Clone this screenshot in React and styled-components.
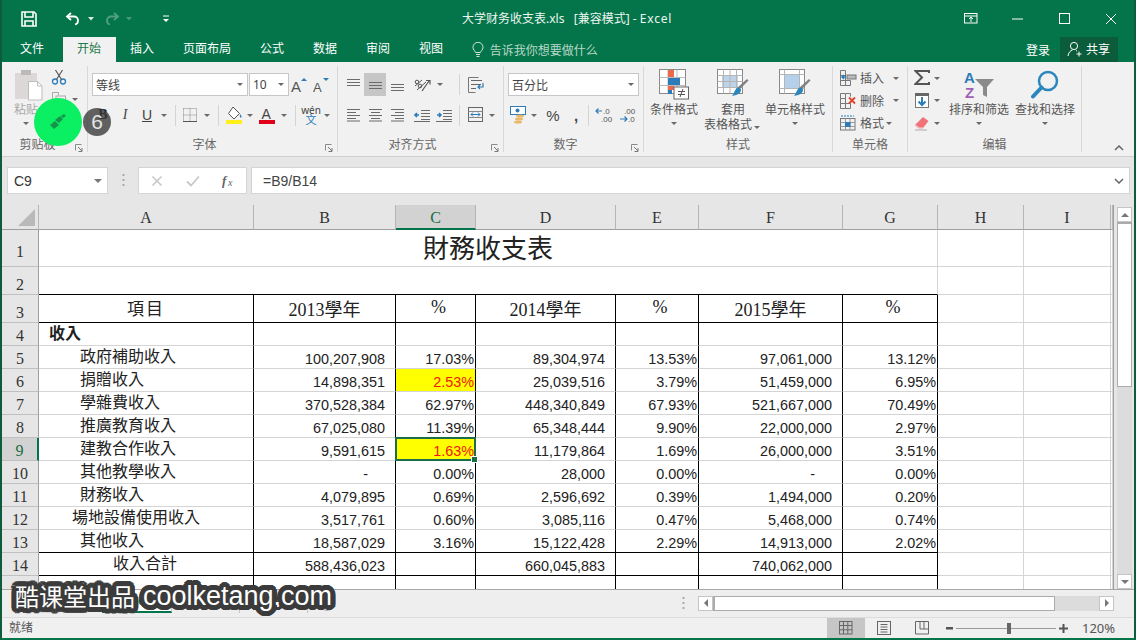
import React from 'react';
import styled, { createGlobalStyle } from 'styled-components';

const GREEN = '#04754a';
const UI_FONT = `"Noto Sans", "Noto Sans CJK SC", sans-serif`;
const CELL_FONT = `"Liberation Serif", "Noto Sans CJK TC", serif`;
const NUM_FONT = `"Liberation Sans", Arial, sans-serif`;

const GlobalStyle = createGlobalStyle`
  html, body { margin: 0; padding: 0; background: #fff; }
  body { font-family: ${UI_FONT}; overflow: hidden; }
`;

const Window = styled.div`
  position: relative;
  width: 1136px;
  height: 640px;
  box-sizing: border-box;
  display: flex;
  flex-direction: column;
  overflow: hidden;
  background: ${GREEN};
  border-left: 2px solid #0d5c3c;
  border-right: 2px solid #0d5c3c;
  border-bottom: 2px solid ${GREEN};
`;

const TitleBar = styled.div`
  height: 37px;
  display: flex;
  align-items: center;
  color: #fff;
  flex: none;
`;

const QuickAccess = styled.div`
  display: flex;
  align-items: center;
  width: 412px;
  padding-left: 18px;
  box-sizing: border-box;
  flex: none;
`;

const QaButton = styled.span`
  display: inline-flex;
  justify-content: center;
  align-items: center;
  width: ${(p) => p.$w}px;
  margin-left: ${(p) => p.$ml || 0}px;
  opacity: ${(p) => (p.$off ? 0.3 : 1)};
`;

const TitleText = styled.div`
  font-size: 12px;
  width: 400px;
  margin: -1px 0 0 48px;
  color: #eef6f1;
  white-space: pre;
  flex: none;
`;

const ExcelWord = styled.span`
  letter-spacing: 0.8px;
`;

const WindowButtons = styled.div`
  display: flex;
  margin-left: auto;
`;

const WinButton = styled.span`
  width: 46.5px;
  display: flex;
  justify-content: center;
  align-items: center;
`;

const TabBar = styled.div`
  height: 25px;
  display: flex;
  align-items: stretch;
  padding-left: 3.5px;
  flex: none;
`;

const Tab = styled.div`
  padding: 0 14.5px;
  margin-right: ${(p) => p.$mr || 0}px;
  font-size: 12px;
  line-height: 23px;
  color: ${(p) => (p.$active ? '#1d7a4c' : '#fff')};
  background: ${(p) => (p.$active ? '#f1f1f1' : 'transparent')};
`;

const TellMe = styled.div`
  display: flex;
  align-items: center;
  gap: 6px;
  margin-left: 14px;
  font-size: 12px;
  color: #b9d8c8;
`;

const AccountArea = styled.div`
  margin-left: auto;
  display: flex;
  align-items: center;
  padding-right: 16px;
  color: #fff;
  font-size: 12px;
`;

const ShareButton = styled.div`
  display: flex;
  align-items: center;
  gap: 3px;
  height: 25px;
  padding: 0 8px 0 7px;
  margin: -1px 0 0 10px;
  background: #0a5c3a;
`;

const Ribbon = styled.div`
  height: 94px;
  flex: none;
  display: flex;
  padding-left: 2px;
  background: #f1f1f1;
  border-bottom: 1px solid #d0d0d0;
  color: #555;
  font-size: 12px;
`;

const Group = styled.div`
  width: ${(p) => p.$w}px;
  flex: none;
  box-sizing: border-box;
  display: flex;
  flex-direction: column;
  margin: 4px 0;
  border-right: 1px solid #d8d8d8;
`;

const GroupBody = styled.div`
  display: flex;
  height: 70px;
  flex: none;
`;

const GroupStack = styled.div`
  display: flex;
  flex-direction: column;
  gap: 8px;
  padding-top: 7px;
  padding-left: ${(p) => p.$pl || 0}px;
`;

const GroupLabel = styled.div`
  display: grid;
  grid-template-columns: ${(p) => (p.$launcher ? '1fr auto 1fr 12px' : '1fr auto 1fr')};
  align-items: center;
  height: 16px;
  flex: none;
  margin-top: 1px;
  color: #666;
  font-size: 12px;
  line-height: 16px;
  padding-right: ${(p) => (p.$launcher ? 4 : 0)}px;
`;

const Launcher = styled.span`
  grid-column: 4;
  justify-self: end;
  display: flex;
  align-self: end;
  padding-bottom: 1px;
`;

const ToolRow = styled.div`
  display: flex;
  align-items: center;
  height: ${(p) => p.$h || 22}px;
`;

const Tool = styled.span`
  width: ${(p) => p.$w || 22}px;
  height: ${(p) => p.$h || 22}px;
  display: inline-flex;
  align-items: center;
  justify-content: center;
  flex: none;
  background: ${(p) => (p.$on ? '#c6c6c6' : 'transparent')};
  color: #444;
`;

const BoldTool = styled(Tool)`
  font: bold 14px ${CELL_FONT};
  color: #111;
`;

const ItalicTool = styled(Tool)`
  font: italic 14px ${CELL_FONT};
`;

const UnderlineTool = styled(Tool)`
  font: 14px ${NUM_FONT};
  text-decoration: underline;
`;

const SignTool = styled(Tool)`
  font: ${(p) => (p.$bold ? 'bold ' : '')}15px ${NUM_FONT};
`;

const PhoneticTool = styled(Tool)`
  flex-direction: column;
  font-size: 10px;
  line-height: 10px;
`;

const PhoneticChar = styled.span`
  color: #2b7cb8;
  font-size: 11px;
`;

const Caret = styled.span`
  width: ${(p) => p.$w || 10}px;
  display: inline-flex;
  justify-content: center;
  align-items: center;
  flex: none;
  &::after {
    content: '';
    border-left: 3px solid transparent;
    border-right: 3px solid transparent;
    border-top: 3px solid #6a6a6a;
  }
`;

const Sep = styled.span`
  width: 1px;
  height: 21px;
  flex: none;
  background: #d4d4d4;
  margin-left: ${(p) => p.$l}px;
  margin-right: ${(p) => p.$r}px;
`;

const Select = styled.div`
  width: ${(p) => p.$w}px;
  height: 23px;
  margin-left: ${(p) => p.$ml || 0}px;
  box-sizing: border-box;
  flex: none;
  display: flex;
  align-items: center;
  justify-content: space-between;
  padding: 0 2px 0 3px;
  background: #fff;
  border: 1px solid #c6c6c6;
  color: #444;
  font-size: 12px;
`;

const BigButton = styled.div`
  width: ${(p) => p.$w}px;
  margin-left: ${(p) => p.$ml || 0}px;
  flex: none;
  display: flex;
  flex-direction: column;
  align-items: center;
  padding-top: 2px;
  font-size: 12px;
  line-height: 15px;
  color: ${(p) => (p.$muted ? '#a8a8a8' : '#555')};
  white-space: nowrap;
`;

const BigIcon = styled.span`
  height: 33px;
  display: flex;
  align-items: center;
  margin-bottom: 1px;
  padding-left: ${(p) => p.$pl || 0}px;
`;

const BigCaret = styled(Caret)`
  height: 12px;
`;

const SmallColumn = styled.div`
  display: flex;
  flex-direction: column;
  flex: none;
  padding-top: 1px;
  margin-left: ${(p) => p.$ml || 0}px;
`;

const CellAction = styled.div`
  height: 22.5px;
  display: flex;
  align-items: center;
  gap: 3px;
  font-size: 12px;
  color: #555;
  white-space: nowrap;
`;

const CollapseSlot = styled.div`
  flex: 1;
  display: flex;
  align-items: flex-end;
  justify-content: flex-end;
  padding: 0 10px 5px 0;
`;

const FormulaBar = styled.div`
  height: 48px;
  flex: none;
  box-sizing: border-box;
  background: #e6e6e6;
  display: flex;
  align-items: flex-start;
  padding: 10px 4px 0 5px;
`;

const NameBox = styled.div`
  width: 101px;
  height: 27px;
  box-sizing: border-box;
  flex: none;
  display: flex;
  align-items: center;
  justify-content: space-between;
  padding: 0 5px 0 6px;
  background: #fff;
  border: 1px solid #d4d4d4;
  font: 14px ${NUM_FONT};
  color: #333;
`;

const Grip = styled.span`
  width: 30px;
  height: 27px;
  flex: none;
  display: flex;
  align-items: center;
  justify-content: center;
`;

const FormulaButtons = styled.div`
  width: 109px;
  height: 27px;
  flex: none;
  box-sizing: border-box;
  display: flex;
  align-items: center;
  padding: 0 10px 0 12px;
  justify-content: space-between;
  background: #fff;
  border: 1px solid #d4d4d4;
`;

const FormulaInput = styled.div`
  flex: 1;
  height: 27px;
  margin-left: 4px;
  box-sizing: border-box;
  display: flex;
  align-items: center;
  justify-content: space-between;
  padding: 0 5px 0 11px;
  background: #fff;
  border: 1px solid #d4d4d4;
  font: 14px ${NUM_FONT};
  color: #444;
`;

const SheetArea = styled.div`
  height: 384px;
  flex: none;
  display: flex;
  background: #e6e6e6;
`;

const Sheet = styled.div`
  width: 1111px;
  height: 384px;
  flex: none;
  display: grid;
  grid-template-columns: 37px 215px 142px 80px 140px 83px 144px 95px 86px 87px 2px;
  grid-template-rows: 25px 37px 28px 28px repeat(12, 23px);
  overflow: hidden;
  border-right: 1px solid #9e9e9e;
`;

const Corner = styled.div`
  background: #e6e6e6;
  border-right: 1px solid #b5b5b5;
  border-bottom: 1px solid #9e9e9e;
  display: flex;
  align-items: flex-end;
  justify-content: flex-end;
  padding: 0 3px 3px 0;
`;

const ColHead = styled.div`
  box-sizing: border-box;
  background: ${(p) => (p.$sel ? '#d2d2d2' : '#e6e6e6')};
  border-right: 1px solid #b5b5b5;
  border-bottom: ${(p) => (p.$sel ? `2px solid ${GREEN}` : '1px solid #9e9e9e')};
  font: 16px ${CELL_FONT};
  color: ${(p) => (p.$sel ? '#176b45' : '#333')};
  text-align: center;
  line-height: 26px;
`;

const RowHead = styled.div`
  box-sizing: border-box;
  background: ${(p) => (p.$sel ? '#d2d2d2' : '#e6e6e6')};
  border-right: ${(p) => (p.$sel ? `2px solid ${GREEN}` : '1px solid #9e9e9e')};
  border-bottom: 1px solid #c0c0c0;
  font: 16px/1 ${CELL_FONT};
  color: ${(p) => (p.$sel ? '#176b45' : '#333')};
  display: flex;
  align-items: flex-end;
  justify-content: center;
  padding-bottom: ${(p) => p.$pb || 1}px;
`;

const Cell = styled.div`
  position: relative;
  box-sizing: border-box;
  min-width: 0;
  grid-column: ${(p) => (p.$span ? `span ${p.$span}` : 'auto')};
  display: flex;
  align-items: center;
  justify-content: ${(p) => p.$justify || 'flex-start'};
  padding-left: ${(p) => p.$pl || 0}px;
  padding-right: ${(p) => p.$pr || 0}px;
  background: ${(p) => p.$fill || '#fff'};
  color: ${(p) => p.$color || '#222'};
  border-right: 1px solid ${(p) => (p.$darkRight ? '#000' : '#d4d4d4')};
  border-bottom: 1px solid ${(p) => (p.$darkBottom ? '#000' : '#d4d4d4')};
  white-space: nowrap;
`;

const NumberCell = styled(Cell)`
  font: 14.4px ${NUM_FONT};
  padding-top: 3px;
`;

const LabelCell = styled(Cell)`
  font: ${(p) => (p.$bold ? 'bold ' : '')}16px ${CELL_FONT};
  padding-bottom: 4px;
`;

const HeadCell = styled(Cell)`
  font: ${(p) => p.$size || 18}px ${CELL_FONT};
  letter-spacing: ${(p) => p.$track || 0}px;
  padding-bottom: 2px;
`;

const TitleCell = styled(Cell)`
  font: 26px ${CELL_FONT};
  padding-bottom: 4px;
`;

const Selection = styled.span`
  position: absolute;
  left: -1px;
  top: -1px;
  right: -1px;
  bottom: -1px;
  border: 2px solid #1a6f48;
  pointer-events: none;
  z-index: 2;
  &::after {
    content: '';
    position: absolute;
    right: -4px;
    bottom: -4px;
    width: 5px;
    height: 5px;
    background: #1a6f48;
    border: 1px solid #fff;
  }
`;

const VScroll = styled.div`
  flex: none;
  width: 17px;
  margin-left: 3px;
  display: flex;
  flex-direction: column;
  padding-top: 2px;
`;

const ScrollButton = styled.div`
  box-sizing: border-box;
  width: 15px;
  height: 15px;
  flex: none;
  display: flex;
  align-items: center;
  justify-content: center;
  background: #fff;
  border: 1px solid #c4c4c4;
`;

const VThumb = styled.div`
  width: 15px;
  height: 165px;
  box-sizing: border-box;
  flex: none;
  background: #fff;
  border: 1px solid #ababab;
  border-top-width: 2px;
`;

const VTrack = styled.div`
  width: 15px;
  flex: 1;
  background: #dcdcdc;
`;

const TabStrip = styled.div`
  height: 28px;
  flex: none;
  box-sizing: border-box;
  display: flex;
  align-items: flex-start;
  background: #eeeeee;
  border-top: 1px solid #a8a8a8;
`;

const SheetTab = styled.div`
  width: ${(p) => p.$w}px;
  height: 23px;
  margin-left: ${(p) => p.$ml || 0}px;
  box-sizing: border-box;
  flex: none;
  text-align: center;
  font-size: 12px;
  line-height: 22px;
  color: ${(p) => (p.$active ? GREEN : '#555')};
  background: ${(p) => (p.$active ? '#fff' : 'transparent')};
  border-right: 1px solid #c4c4c4;
  border-bottom: ${(p) => (p.$active ? `2px solid ${GREEN}` : 'none')};
`;

const AddSheet = styled.span`
  display: flex;
  margin: 5px 0 0 11px;
`;

const HScrollGroup = styled.div`
  display: flex;
  align-items: center;
  margin-left: auto;
  height: 26px;
  padding-right: 20px;
`;

const HThumb = styled.div`
  width: 342px;
  height: 15px;
  box-sizing: border-box;
  background: #fff;
  border: 1px solid #ababab;
  border-left-width: 2px;
`;

const HTrack = styled.div`
  width: 44px;
  height: 15px;
  background: #dcdcdc;
`;

const StatusBar = styled.div`
  flex: 1;
  display: flex;
  align-items: stretch;
  background: #f0f0f0;
  border-top: 1px solid #dcdcdc;
  font-size: 12px;
  color: #555;
`;

const StatusText = styled.div`
  padding-left: 7px;
  line-height: 20px;
`;

const ViewButtons = styled.div`
  margin-left: auto;
  display: flex;
`;

const ViewButton = styled.div`
  width: 38px;
  display: flex;
  align-items: center;
  justify-content: center;
  background: ${(p) => (p.$on ? '#c6c6c6' : 'transparent')};
`;

const ZoomControl = styled.div`
  display: flex;
  align-items: center;
  padding: 0 20px 0 5px;
`;

const ZoomTrack = styled.div`
  position: relative;
  width: 100px;
  height: 1px;
  margin: 0 3px;
  background: #9a9a9a;
  &::after {
    content: '';
    position: absolute;
    left: 51px;
    top: -5px;
    width: 4px;
    height: 11px;
    background: #666;
  }
`;

const ZoomValue = styled.span`
  width: 32px;
  margin-left: 14px;
  font-size: 13px;
  color: #555;
`;

const Touch = styled.div`
  position: absolute;
  left: 32px;
  top: 98px;
  width: 48px;
  height: 48px;
  border-radius: 50%;
  background: #0bef62;
  display: flex;
  align-items: center;
  justify-content: center;
`;

const TouchCount = styled.div`
  position: absolute;
  left: 81px;
  top: 108px;
  width: 28px;
  height: 28px;
  border-radius: 50%;
  background: rgba(60, 60, 60, 0.8);
  color: #e4e4e4;
  font: 21px/28px ${NUM_FONT};
  text-align: center;
`;

// round dark halo around the caption letters, the way the video burns it in
const HALO = Array.from({ length: 20 }, (_, i) => {
  const a = (i / 20) * Math.PI * 2;
  return `${(Math.cos(a) * 5).toFixed(1)}px ${(Math.sin(a) * 5).toFixed(1)}px 0 #3b3b3b`;
}).join(', ');

const Watermark = styled.div`
  position: absolute;
  left: 13px;
  top: 580px;
  display: flex;
  align-items: center;
  gap: 8px;
  color: #fff;
  white-space: nowrap;
  text-shadow: ${HALO};
`;

const WatermarkCn = styled.span`
  font: 24px/32px "Noto Sans CJK SC", sans-serif;
`;

const WatermarkEn = styled.span`
  font: 27px/32px ${NUM_FONT};
`;

const Svg = ({ w, h = w, children, ...rest }) => (
  <svg width={w} height={h} viewBox={`0 0 ${w} ${h}`} fill="none" {...rest}>{children}</svg>
);

const LINE = '#6b6b6b';
const BLUE = '#2b7cb8';

const SaveIcon = () => (
  <Svg w={16}>
    <path d="M1 1h12l2 2v12H1z" stroke="#fff" strokeWidth="1.6" />
    <path d="M4 1v5h8V1M4 15v-5h8v5" stroke="#fff" strokeWidth="1.6" />
  </Svg>
);

const UndoIcon = () => (
  <Svg w={16} h={14}>
    <path d="M6 1L2 4.500 6 8" stroke="#fff" strokeWidth="1.800" />
    <path d="M2.500 4.500H9a4 4 0 0 1 4 4 4 4 0 0 1-3 4" stroke="#fff" strokeWidth="1.800" />
  </Svg>
);

const RedoIcon = () => (
  <Svg w={16} h={14}>
    <path d="M10 1l4 3.500L10 8" stroke="#fff" strokeWidth="1.800" />
    <path d="M13.500 4.500H7a4 4 0 0 0-4 4 4 4 0 0 0 3 4" stroke="#fff" strokeWidth="1.800" />
  </Svg>
);

const CustomizeIcon = () => (
  <Svg w={8} h={8}>
    <path d="M1 1h6" stroke="#fff" />
    <path d="M1 4h6L4 7z" fill="#fff" />
  </Svg>
);

const SmallCaretWhite = () => (
  <Svg w={7} h={4}><path d="M0 0h6L3 3.500z" fill="#dcebe3" /></Svg>
);

const RibbonDisplayIcon = () => (
  <Svg w={14} h={11}>
    <rect x=".5" y=".5" width="12.500" height="9.500" stroke="#fff" />
    <path d="M.500 3h12.500M7 9V4.500M5 6l2-2 2 2" stroke="#fff" />
  </Svg>
);

const BulbIcon = () => (
  <Svg w={12} h={16}>
    <path d="M3.500 10.500C3 8.500 1 8 1 5.300a5 5 0 0 1 10 0c0 2.700-2 3.200-2.500 5.200z" stroke="#cfe5d8" />
    <path d="M4 12.500h4M4.500 14.500h3" stroke="#cfe5d8" />
  </Svg>
);

const ShareIcon = () => (
  <Svg w={16} h={16}>
    <circle cx="7" cy="5" r="3.600" stroke="#fff" />
    <path d="M1 15c.5-3.500 2.500-5.500 4.500-6M9 9.500l1 .6" stroke="#fff" />
    <path d="M12 10.500v5M9.500 13h5" stroke="#fff" />
  </Svg>
);

const PasteIcon = () => (
  <Svg w={30} h={32}>
    <rect x="1" y="4" width="22" height="26" fill="#dcd8d8" />
    <rect x="7" y="1" width="10" height="5" fill="#bdb9b9" />
    <path d="M14.500 12.500h9l4.500 4.500v14h-13.500z" fill="#fff" stroke="#bdbdbd" />
    <path d="M23.500 12.500v4.500h4.500" stroke="#bdbdbd" />
  </Svg>
);

const ScissorsIcon = () => (
  <Svg w={16}>
    <circle cx="4" cy="12.500" r="2.500" stroke={BLUE} strokeWidth="1.300" />
    <circle cx="12" cy="12.500" r="2.500" stroke={BLUE} strokeWidth="1.300" />
    <path d="M5.500 10.500L11.500 1M10.500 10.500L4.500 1" stroke="#555" strokeWidth="1.200" />
  </Svg>
);

const CopyIcon = () => (
  <Svg w={16}>
    <path d="M1.500 1.500h6v3M1.500 1.500v10h3" stroke="#aaa" />
    <rect x="5" y="5" width="9.500" height="10" fill="#f1f1f1" stroke="#aaa" />
    <path d="M7 8h5.500M7 10h5.500M7 12h5.500" stroke="#bbb" />
  </Svg>
);

const BrushIcon = () => (
  <Svg w={18} h={16}>
    <path d="M1 11l5-4 4 4-5 4z" fill="#17944c" />
    <path d="M6 6l5-4 3 3-4 4z" fill="#17944c" />
    <path d="M12 2l3-2 2 2-3 2z" fill="#17944c" />
  </Svg>
);

const Launch = () => (
  <Svg w={8} h={8}>
    <path d="M.500 6.500v-6h6" stroke="#8a8a8a" />
    <path d="M3 3l4 4M7 4v3.500H3.500" stroke="#777" />
  </Svg>
);

const GrowIcon = ({ up }) => (
  <Svg w={18} h={18}>
    <text x="0" y="16" fontFamily={NUM_FONT} fontSize={up ? 15 : 13} fill="#555">A</text>
    <path d={up ? 'M10 5l3-3 3 3z' : 'M10 2h6l-3 3z'} fill={BLUE} />
  </Svg>
);

const BorderIcon = () => (
  <Svg w={14}>
    <path d="M.500.500h13v13M.500.500v13M7 .500v13M.500 7h13" stroke="#888" strokeDasharray="1 1" />
    <path d="M0 13.500h14" stroke="#555" />
  </Svg>
);

const FillIcon = () => (
  <Svg w={18} h={18}>
    <path d="M7 1l6.500 6.500L8 13 2.500 7.500z" fill="#fff" stroke="#555" />
    <path d="M14 8c1.500 2 2 3 1.200 3.600-1 .6-1.700-.6-1.200-3.600z" fill={BLUE} />
    <rect y="14" x="0" width="16" height="4" fill="#ffef1a" />
  </Svg>
);

const FontColorIcon = () => (
  <Svg w={16} h={18}>
    <text x="2.500" y="13" fontFamily={NUM_FONT} fontSize="14" fill="#444">A</text>
    <rect y="14" width="16" height="4" fill="#e0001a" />
  </Svg>
);

const lines = (rows) => rows.map(([x1, x2, y]) => `M${x1} ${y}H${x2}`).join('');

const AlignIcon = ({ rows }) => (
  <Svg w={15} h={14}><path d={lines(rows)} stroke={LINE} /></Svg>
);

const ALIGN = {
  top: [[1, 14, 1.5], [1, 14, 4.5], [1, 14, 7.5]],
  middle: [[1, 14, 4.5], [1, 14, 7.5], [1, 14, 10.5]],
  bottom: [[1, 14, 6.5], [1, 14, 9.5], [1, 14, 12.5]],
  left: [[1, 14, 1.5], [1, 10, 4.5], [1, 14, 7.5], [1, 10, 10.5], [1, 14, 13]],
  center: [[1, 14, 1.5], [3, 12, 4.5], [1, 14, 7.5], [3, 12, 10.5], [1, 14, 13]],
  right: [[1, 14, 1.5], [5, 14, 4.5], [1, 14, 7.5], [5, 14, 10.5], [1, 14, 13]],
};

const OrientIcon = () => (
  <Svg w={18} h={16}>
    <path d="M2 9l7-6M4 13l9-8" stroke="#555" />
    <circle cx="4" cy="5" r="1.800" stroke="#555" />
    <circle cx="7" cy="9" r="1.800" stroke="#555" />
    <path d="M9 14l7-10M13 3.500h4v4" stroke="#555" strokeWidth="1.200" />
  </Svg>
);

const WrapIcon = () => (
  <Svg w={17} h={16}>
    <path d="M.500.500h10M.500 15.500h7M.500.500v15" stroke="#777" />
    <path d="M3 3.500h11M3 7.500h10M3 11.500h5" stroke="#666" />
    <path d="M15 6v4h-5M12 8l-2 2 2 2" stroke={BLUE} strokeWidth="1.200" />
  </Svg>
);

const MergeIcon = () => (
  <Svg w={16}>
    <rect x=".5" y=".5" width="14" height="14" stroke="#666" />
    <path d="M.500 4.500h14M.500 10.500h14" stroke="#888" />
    <path d="M3 7.500h9M5 5.500l-2 2 2 2M10 5.500l2 2-2 2" stroke={BLUE} />
  </Svg>
);

const IndentIcon = ({ flip }) => (
  <Svg w={16} h={13}>
    <path d="M7 1.500h9M7 4.500h9M7 7.500h9M7 10.500h9M0 12.500h16" stroke={LINE} />
    <path d={flip ? 'M1 6h4M3 4l2 2-2 2' : 'M5 6H1M3 4L1 6l2 2'} stroke={BLUE} strokeWidth="1.600" />
  </Svg>
);

const CurrencyIcon = () => (
  <Svg w={16} h={18}>
    <rect x="0.500" y="0.500" width="15" height="8" fill="#fff" stroke={BLUE} />
    <circle cx="7.500" cy="4.500" r="2" fill={BLUE} />
    <ellipse cx="10" cy="10" rx="4" ry="1.500" fill="#e9b96a" />
    <ellipse cx="9" cy="13" rx="4" ry="1.500" fill="#e9b96a" />
    <ellipse cx="8" cy="16" rx="4" ry="1.500" fill="#e9b96a" />
  </Svg>
);

const DecimalMoreIcon = () => (
  <Svg w={20} h={16}>
    <text x="8" y="7" fontFamily={NUM_FONT} fontSize="8" fill="#555">.0</text>
    <text x="6" y="15" fontFamily={NUM_FONT} fontSize="8" fill="#555">.00</text>
    <path d="M7 4H1M3.500 1.500L1 4l2.500 2.500" stroke={BLUE} strokeWidth="1.200" />
  </Svg>
);

const DecimalLessIcon = () => (
  <Svg w={20} h={16}>
    <text x="7" y="7" fontFamily={NUM_FONT} fontSize="8" fill="#555">.00</text>
    <text x="11" y="15" fontFamily={NUM_FONT} fontSize="8" fill="#555">.0</text>
    <path d="M3 12h7M7.500 9.500L10 12l-2.500 2.500" stroke={BLUE} strokeWidth="1.200" />
  </Svg>
);

const ConditionalIcon = () => (
  <Svg w={30} h={31}>
    <rect x=".5" y=".5" width="26" height="24" fill="#fff" stroke="#888" />
    <path d="M9 .500v24M18 .500v24M.500 8.500h26M.500 16.500h26" stroke="#bbb" />
    <rect x="9" y="1" width="6" height="7" fill="#ec6a4a" />
    <rect x="9" y="9" width="12" height="7" fill="#2b7cb8" />
    <rect x="9" y="17" width="6" height="4" fill="#ec6a4a" />
    <rect x="9" y="21" width="4" height="4" fill="#2b7cb8" />
    <rect x="15" y="18" width="14.500" height="12" fill="#fff" stroke="#666" />
    <path d="M19 22.500h7M19 25.500h7M24 20l-3 8" stroke="#555" />
  </Svg>
);

const TableStyleIcon = () => (
  <Svg w={32} h={31}>
    <rect x=".5" y=".5" width="25" height="24" fill="#fff" stroke="#888" />
    <rect x="5" y="7" width="16" height="12" fill="#bcd3e8" />
    <path d="M.500 6.500h25M.500 12.500h25M.500 18.500h25M6.500.500v24M13 .500v24M19.500.500v24" stroke="#b5b5b5" />
    <path d="M30 10l1.500 1.500-8 8-3-1z" fill="#808080" />
    <path d="M20 19c2-1 4 0 4 2 0 3-3 5-9 6 2-2 2-5 5-8z" fill="#2b86bd" />
  </Svg>
);

const CellStyleIcon = () => (
  <Svg w={32} h={31}>
    <rect x=".5" y=".5" width="25" height="24" fill="#fff" stroke="#888" />
    <path d="M.500 5.500h25M.500 19.500h25M5.500.500v24M20.500.500v24" stroke="#b5b5b5" />
    <rect x="6" y="6" width="14" height="13" fill="#b4d0ea" />
    <path d="M30 10l1.500 1.500-8 8-3-1z" fill="#808080" />
    <path d="M20 19c2-1 4 0 4 2 0 3-3 5-9 6 2-2 2-5 5-8z" fill="#2b86bd" />
  </Svg>
);

const InsertIcon = () => (
  <Svg w={17} h={16}>
    <path d="M.500.500h5v15h-5zM.500 5.500h5M.500 10.500h5M5.500 10.500h5v5h-5z" stroke="#777" />
    <rect x="7" y="5" width="9" height="4" fill="#bbb" stroke="#777" />
    <path d="M6 7H2M4 5L2 7l2 2" stroke={BLUE} strokeWidth="1.400" />
  </Svg>
);

const DeleteIcon = () => (
  <Svg w={17} h={16}>
    <path d="M.500.500h5v5h-5zM.500 5.500h5v5h-5zM.500 10.500h5v5h-5zM5.500 10.500h5v5h-5zM5.500.500h5v3" stroke="#777" />
    <path d="M9 4.500l6 6M15 4.500l-6 6" stroke="#e0432c" strokeWidth="1.800" />
  </Svg>
);

const FormatIcon = () => (
  <Svg w={17} h={16}>
    <rect x=".5" y="3.500" width="14.500" height="11.500" stroke="#777" />
    <path d="M.500 7.500h14.500M.500 11.500h14.500M5.500 3.500V15M10 3.500V15" stroke="#999" />
    <rect x="5" y="7" width="5.500" height="5" fill={BLUE} />
    <path d="M1 1h13" stroke={BLUE} strokeDasharray="2 1" />
  </Svg>
);

const SigmaIcon = () => (
  <Svg w={16}>
    <path d="M15 3V1H1.500L8 7.500 1.500 14H15v-2" stroke="#555" strokeWidth="2" />
  </Svg>
);

const FillDownIcon = () => (
  <Svg w={15}>
    <rect x=".5" y=".5" width="13" height="14" fill="#fff" stroke="#777" />
    <rect x="0" y="0" width="14" height="3" fill="#666" />
    <path d="M7 4v8M3.500 8.500L7 12l3.500-3.500" stroke={BLUE} strokeWidth="2" />
  </Svg>
);

const EraserIcon = () => (
  <Svg w={16} h={15}>
    <path d="M9 1l5.500 4L9 12H5L1 9z" fill="#f0737a" />
    <path d="M1 9l4 3h4" stroke="#f7b9bc" strokeWidth="1.500" />
    <path d="M1 14h12" stroke="#aaa" />
  </Svg>
);

const SortIcon = () => (
  <Svg w={32} h={30}>
    <text x="1" y="13" fontFamily={NUM_FONT} fontWeight="bold" fontSize="15" fill="#2b7cb8">A</text>
    <text x="2" y="28" fontFamily={NUM_FONT} fontWeight="bold" fontSize="15" fill="#a05fb4">Z</text>
    <path d="M12 9h19l-7 8v10l-4-2v-8z" fill="#8a8a8a" />
  </Svg>
);

const FindIcon = () => (
  <Svg w={28} h={30}>
    <circle cx="17" cy="11" r="9" stroke="#2b86bd" strokeWidth="2.500" />
    <path d="M10.500 17.500L2 26.500" stroke="#2b86bd" strokeWidth="4" strokeLinecap="round" />
  </Svg>
);

const ChevronUp = () => (
  <Svg w={10} h={6}>
    <path d="M1 5l4-4 4 4" stroke="#666" strokeWidth="1.500" />
  </Svg>
);

const ChevronDown = () => (
  <Svg w={10} h={6}>
    <path d="M1 1l4 4 4-4" stroke="#666" strokeWidth="1.500" />
  </Svg>
);

const CrossIcon = () => (
  <Svg w={12}><path d="M1.500 1.500l9 9M10.500 1.500l-9 9" stroke="#c8c8c8" strokeWidth="1.600" /></Svg>
);

const CheckIcon = () => (
  <Svg w={14} h={12}><path d="M1 6.500l4 4 8-9" stroke="#c8c8c8" strokeWidth="1.800" /></Svg>
);

const FxIcon = () => (
  <Svg w={14}>
    <text x="0" y="11" fontFamily={CELL_FONT} fontStyle="italic" fontWeight="bold" fontSize="13" fill="#666">f</text>
    <text x="6" y="12" fontFamily={CELL_FONT} fontStyle="italic" fontSize="10" fill="#666">x</text>
  </Svg>
);

const DotsIcon = () => (
  <Svg w={3} h={13}>
    <path d="M.500 1h2M.500 6h2M.500 11h2" stroke="#aaa" strokeWidth="2" />
  </Svg>
);

const CornerIcon = () => (
  <Svg w={17} h={17}><path d="M17 0v17H0z" fill="#b9b9b9" /></Svg>
);

const Arrow = ({ dir }) => {
  const d = { up: 'M0 6l4-4 4 4z', down: 'M0 2h8L4 6z', left: 'M6 0v8L2 4z', right: 'M2 0v8l4-4z' }[dir];
  return <Svg w={8} h={8}><path d={d} fill="#777" /></Svg>;
};

const PlusCircle = () => (
  <Svg w={16}>
    <circle cx="8" cy="8" r="7.300" stroke="#9a9a9a" />
    <path d="M8 3.500v9M3.500 8h9" stroke="#888" strokeWidth="2" />
  </Svg>
);

const NormalViewIcon = () => (
  <Svg w={14}>
    <rect x=".5" y=".5" width="12.500" height="12.500" stroke="#666" />
    <path d="M4.500.500v12.500M8.800.500v12.500M.500 4.500h12.500M.500 8.800h12.500" stroke="#666" />
  </Svg>
);

const PageViewIcon = () => (
  <Svg w={14}>
    <rect x=".5" y=".5" width="13" height="13" stroke="#666" />
    <path d="M3.500 3.500h7M3.500 6h7M3.500 8.500h7M3.500 11h7" stroke="#666" />
  </Svg>
);

const BreakViewIcon = () => (
  <Svg w={14}>
    <path d="M.500.500h13v12.500h-13zM5 .500v7.500h8.500M9 .500v7.500" stroke="#666" />
  </Svg>
);

const MinusIcon = () => <Svg w={7} h={3}><rect width="7" height="2.500" fill="#555" /></Svg>;
const PlusIcon = () => <Svg w={9} h={9}><path d="M4.500 0v9M0 4.500h9" stroke="#555" strokeWidth="2" /></Svg>;

const COLS = ['A', 'B', 'C', 'D', 'E', 'F', 'G', 'H', 'I'];

// label, indent, then the values of B..G
const ROWS = [
  { n: 5, label: '政府補助收入', pl: 41, v: ['100,207,908', '17.03%', '89,304,974', '13.53%', '97,061,000', '13.12%'] },
  { n: 6, label: '捐贈收入', pl: 41, v: ['14,898,351', '2.53%', '25,039,516', '3.79%', '51,459,000', '6.95%'], hot: true },
  { n: 7, label: '學雜費收入', pl: 41, v: ['370,528,384', '62.97%', '448,340,849', '67.93%', '521,667,000', '70.49%'] },
  { n: 8, label: '推廣教育收入', pl: 41, v: ['67,025,080', '11.39%', '65,348,444', '9.90%', '22,000,000', '2.97%'] },
  { n: 9, label: '建教合作收入', pl: 41, v: ['9,591,615', '1.63%', '11,179,864', '1.69%', '26,000,000', '3.51%'], hot: true, sel: true },
  { n: 10, label: '其他教學收入', pl: 41, v: ['-', '0.00%', '28,000', '0.00%', '-', '0.00%'] },
  { n: 11, label: '財務收入', pl: 41, v: ['4,079,895', '0.69%', '2,596,692', '0.39%', '1,494,000', '0.20%'] },
  { n: 12, label: '場地設備使用收入', pl: 33, v: ['3,517,761', '0.60%', '3,085,116', '0.47%', '5,468,000', '0.74%'] },
  { n: 13, label: '其他收入', pl: 41, v: ['18,587,029', '3.16%', '15,122,428', '2.29%', '14,913,000', '2.02%'], dark: true },
  { n: 14, label: '收入合計', pl: 74, v: ['588,436,023', '', '660,045,883', '', '740,062,000', ''], dark: true },
];

const EmptyTail = () => (
  <>
    <Cell />
    <Cell />
    <Cell />
  </>
);

const SpreadSheet = () => (
  <Sheet>
    <Corner><CornerIcon /></Corner>
    {COLS.map((c) => (
      <ColHead key={c} $sel={c === 'C'}>{c}</ColHead>
    ))}
    <ColHead />

    <RowHead $pb={6}>1</RowHead>
    <TitleCell $span={7} $justify="center">財務收支表</TitleCell>
    <EmptyTail />

    <RowHead>2</RowHead>
    <Cell $span={7} $darkBottom />
    <EmptyTail />

    <RowHead>3</RowHead>
    <HeadCell $justify="center" $darkRight $darkBottom $size={17} $track={2}>項目</HeadCell>
    {['2013學年', '%', '2014學年', '%', '2015學年', '%'].map((t, i) => (
      <HeadCell key={i} $justify="center" $pl={t === '%' ? 6 : 0} $darkRight $darkBottom>{t}</HeadCell>
    ))}
    <EmptyTail />

    <RowHead>4</RowHead>
    <LabelCell $bold $pl={10} $darkRight>收入</LabelCell>
    {COLS.slice(1, 7).map((c) => (
      <Cell key={c} $darkRight />
    ))}
    <EmptyTail />

    {ROWS.map((r) => (
      <React.Fragment key={r.n}>
        <RowHead $sel={r.sel}>{r.n}</RowHead>
        <LabelCell $pl={r.pl} $darkRight $darkBottom={r.dark}>{r.label}</LabelCell>
        {r.v.map((t, i) => {
          const isPct = i % 2 === 1;
          const isDash = t === '-';
          const hot = r.hot && i === 1;
          return (
            <NumberCell
              key={i}
              $justify="flex-end"
              $pr={isPct ? 1 : isDash ? 27 : 10}
              $darkRight
              $darkBottom={r.dark}
              $fill={hot ? '#ffff00' : undefined}
              $color={hot ? '#f01808' : undefined}
            >
              {t}
              {hot && r.sel && <Selection />}
            </NumberCell>
          );
        })}
        <EmptyTail />
      </React.Fragment>
    ))}

    <RowHead>15</RowHead>
    {COLS.slice(0, 7).map((c) => (
      <Cell key={c} $darkRight />
    ))}
    <EmptyTail />
  </Sheet>
);

const ClipboardGroup = () => (
  <Group $w={84}>
    <GroupBody>
      <BigButton $w={44} $muted>
        <BigIcon $pl={6}><PasteIcon /></BigIcon>
        粘贴
        <BigCaret />
      </BigButton>
      <SmallColumn>
        <ToolRow $h={20}><Tool><ScissorsIcon /></Tool></ToolRow>
        <ToolRow $h={24}><Tool><CopyIcon /></Tool><Caret /></ToolRow>
      </SmallColumn>
    </GroupBody>
    <GroupLabel $launcher>
      <span />
      剪贴板
      <Launcher><Launch /></Launcher>
    </GroupLabel>
  </Group>
);

const FontGroup = () => (
  <Group $w={250}>
    <GroupBody>
      <GroupStack $pl={4}>
        <ToolRow $h={23}>
          <Select $w={156}>等线<Caret /></Select>
          <Select $w={40} $ml={1}>10<Caret /></Select>
          <Tool><GrowIcon up /></Tool>
          <Tool><GrowIcon /></Tool>
        </ToolRow>
        <ToolRow>
          <BoldTool>B</BoldTool>
          <ItalicTool>I</ItalicTool>
          <UnderlineTool>U</UnderlineTool>
          <Caret $w={12} />
          <Sep $l={5} $r={3} />
          <Tool><BorderIcon /></Tool>
          <Caret $w={12} />
          <Sep $l={5} $r={5} />
          <Tool><FillIcon /></Tool>
          <Caret $w={8} />
          <Tool $w={25}><FontColorIcon /></Tool>
          <Caret />
          <Sep $l={6} $r={4} />
          <PhoneticTool>
            wén
            <PhoneticChar>文</PhoneticChar>
          </PhoneticTool>
          <Caret />
        </ToolRow>
      </GroupStack>
    </GroupBody>
    <GroupLabel $launcher>
      <span />
      字体
      <Launcher><Launch /></Launcher>
    </GroupLabel>
  </Group>
);

const AlignGroup = () => (
  <Group $w={166}>
    <GroupBody>
      <GroupStack $pl={4}>
        <ToolRow $h={23}>
          <Tool $h={23}><AlignIcon rows={ALIGN.top} /></Tool>
          <Tool $h={23} $on><AlignIcon rows={ALIGN.middle} /></Tool>
          <Tool $h={23}><AlignIcon rows={ALIGN.bottom} /></Tool>
          <Tool $w={28} $h={23}><OrientIcon /></Tool>
          <Caret $w={8} />
          <Sep $l={15} $r={5} />
          <Tool><WrapIcon /></Tool>
        </ToolRow>
        <ToolRow>
          <Tool><AlignIcon rows={ALIGN.left} /></Tool>
          <Tool><AlignIcon rows={ALIGN.center} /></Tool>
          <Tool><AlignIcon rows={ALIGN.right} /></Tool>
          <Tool $w={28}><IndentIcon /></Tool>
          <Tool $w={16}><IndentIcon flip /></Tool>
          <Sep $l={7} $r={5} />
          <Tool><MergeIcon /></Tool>
          <Caret />
        </ToolRow>
      </GroupStack>
    </GroupBody>
    <GroupLabel $launcher>
      <span />
      对齐方式
      <Launcher><Launch /></Launcher>
    </GroupLabel>
  </Group>
);

const NumberGroup = () => (
  <Group $w={140}>
    <GroupBody>
      <GroupStack $pl={4}>
        <ToolRow $h={23}>
          <Select $w={131}>百分比<Caret /></Select>
        </ToolRow>
        <ToolRow>
          <Tool $w={20}><CurrencyIcon /></Tool>
          <Caret $w={12} />
          <SignTool $w={26}>%</SignTool>
          <SignTool $w={20} $bold>,</SignTool>
          <Sep $l={2} $r={5} />
          <Tool><DecimalMoreIcon /></Tool>
          <Tool><DecimalLessIcon /></Tool>
        </ToolRow>
      </GroupStack>
    </GroupBody>
    <GroupLabel $launcher>
      <span />
      数字
      <Launcher><Launch /></Launcher>
    </GroupLabel>
  </Group>
);

const StylesGroup = () => (
  <Group $w={189}>
    <GroupBody>
      <BigButton $w={60}>
        <BigIcon><ConditionalIcon /></BigIcon>
        条件格式
        <BigCaret />
      </BigButton>
      <BigButton $w={58}>
        <BigIcon><TableStyleIcon /></BigIcon>
        套用
        <span>表格格式<Caret /></span>
      </BigButton>
      <BigButton $w={66}>
        <BigIcon><CellStyleIcon /></BigIcon>
        单元格样式
        <BigCaret />
      </BigButton>
    </GroupBody>
    <GroupLabel>
      <span />
      样式
      <span />
    </GroupLabel>
  </Group>
);

const CellsGroup = () => (
  <Group $w={75}>
    <GroupBody>
      <SmallColumn $ml={7}>
        <CellAction><InsertIcon />插入<Caret $w={18} /></CellAction>
        <CellAction><DeleteIcon />删除<Caret $w={18} /></CellAction>
        <CellAction><FormatIcon />格式<Caret $w={4} /></CellAction>
      </SmallColumn>
    </GroupBody>
    <GroupLabel>
      <span />
      单元格
      <span />
    </GroupLabel>
  </Group>
);

const EditGroup = () => (
  <Group $w={174}>
    <GroupBody>
      <SmallColumn $ml={6}>
        <ToolRow $h={22.5}><Tool $w={16}><SigmaIcon /></Tool><Caret $w={14} /></ToolRow>
        <ToolRow $h={22.5}><Tool $w={16}><FillDownIcon /></Tool><Caret $w={14} /></ToolRow>
        <ToolRow $h={22.5}><Tool $w={16}><EraserIcon /></Tool><Caret $w={14} /></ToolRow>
      </SmallColumn>
      <BigButton $w={66} $ml={2}>
        <BigIcon><SortIcon /></BigIcon>
        排序和筛选
        <BigCaret />
      </BigButton>
      <BigButton $w={66}>
        <BigIcon><FindIcon /></BigIcon>
        查找和选择
        <BigCaret />
      </BigButton>
    </GroupBody>
    <GroupLabel>
      <span />
      编辑
      <span />
    </GroupLabel>
  </Group>
);

export default function App() {
  return (
    <>
      <GlobalStyle />
      <Window>
        <TitleBar>
          <QuickAccess>
            <QaButton $w={18}><SaveIcon /></QaButton>
            <QaButton $w={18} $ml={26}><UndoIcon /></QaButton>
            <QaButton $w={10} $ml={4}><SmallCaretWhite /></QaButton>
            <QaButton $w={18} $ml={7} $off><RedoIcon /></QaButton>
            <QaButton $w={10} $ml={3} $off><SmallCaretWhite /></QaButton>
            <QaButton $w={10} $ml={27}><CustomizeIcon /></QaButton>
          </QuickAccess>
          <TitleText>{'大学财务收支表.xls   [兼容模式] - '}<ExcelWord>Excel</ExcelWord></TitleText>
          <WindowButtons>
            <WinButton><RibbonDisplayIcon /></WinButton>
            <WinButton><Svg w={11} h={2}><path d="M0 1h11" stroke="#fff" /></Svg></WinButton>
            <WinButton><Svg w={11}><rect x=".5" y=".5" width="10" height="10" stroke="#fff" /></Svg></WinButton>
            <WinButton><Svg w={12}><path d="M1 1l10 10M11 1L1 11" stroke="#fff" /></Svg></WinButton>
          </WindowButtons>
        </TitleBar>

        <TabBar>
          <Tab $mr={4}>文件</Tab>
          <Tab $active>开始</Tab>
          <Tab>插入</Tab>
          <Tab>页面布局</Tab>
          <Tab>公式</Tab>
          <Tab>数据</Tab>
          <Tab>审阅</Tab>
          <Tab>视图</Tab>
          <TellMe><BulbIcon />告诉我你想要做什么</TellMe>
          <AccountArea>
            登录
            <ShareButton><ShareIcon />共享</ShareButton>
          </AccountArea>
        </TabBar>

        <Ribbon>
          <ClipboardGroup />
          <FontGroup />
          <AlignGroup />
          <NumberGroup />
          <StylesGroup />
          <CellsGroup />
          <EditGroup />
          <CollapseSlot><ChevronUp /></CollapseSlot>
        </Ribbon>

        <FormulaBar>
          <NameBox>C9<Arrow dir="down" /></NameBox>
          <Grip><DotsIcon /></Grip>
          <FormulaButtons>
            <CrossIcon />
            <CheckIcon />
            <FxIcon />
          </FormulaButtons>
          <FormulaInput>=B9/B14<ChevronDown /></FormulaInput>
        </FormulaBar>

        <SheetArea>
          <SpreadSheet />
          <VScroll>
            <ScrollButton><Arrow dir="up" /></ScrollButton>
            <VThumb />
            <VTrack />
            <ScrollButton><Arrow dir="down" /></ScrollButton>
          </VScroll>
        </SheetArea>

        <TabStrip>
          <SheetTab $w={70} $ml={100} $active>Sheet1</SheetTab>
          <SheetTab $w={68}>Sheet2</SheetTab>
          <SheetTab $w={68}>Sheet3</SheetTab>
          <AddSheet><PlusCircle /></AddSheet>
          <HScrollGroup>
            <Grip><DotsIcon /></Grip>
            <ScrollButton><Arrow dir="left" /></ScrollButton>
            <HThumb />
            <HTrack />
            <ScrollButton><Arrow dir="right" /></ScrollButton>
          </HScrollGroup>
        </TabStrip>

        <StatusBar>
          <StatusText>就绪</StatusText>
          <ViewButtons>
            <ViewButton $on><NormalViewIcon /></ViewButton>
            <ViewButton><PageViewIcon /></ViewButton>
            <ViewButton><BreakViewIcon /></ViewButton>
          </ViewButtons>
          <ZoomControl>
            <MinusIcon />
            <ZoomTrack />
            <PlusIcon />
            <ZoomValue>120%</ZoomValue>
          </ZoomControl>
        </StatusBar>

        <Touch><BrushIcon /></Touch>
        <TouchCount>6</TouchCount>
        <Watermark>
          <WatermarkCn>酷课堂出品</WatermarkCn>
          <WatermarkEn>coolketang.com</WatermarkEn>
        </Watermark>
      </Window>
    </>
  );
}
